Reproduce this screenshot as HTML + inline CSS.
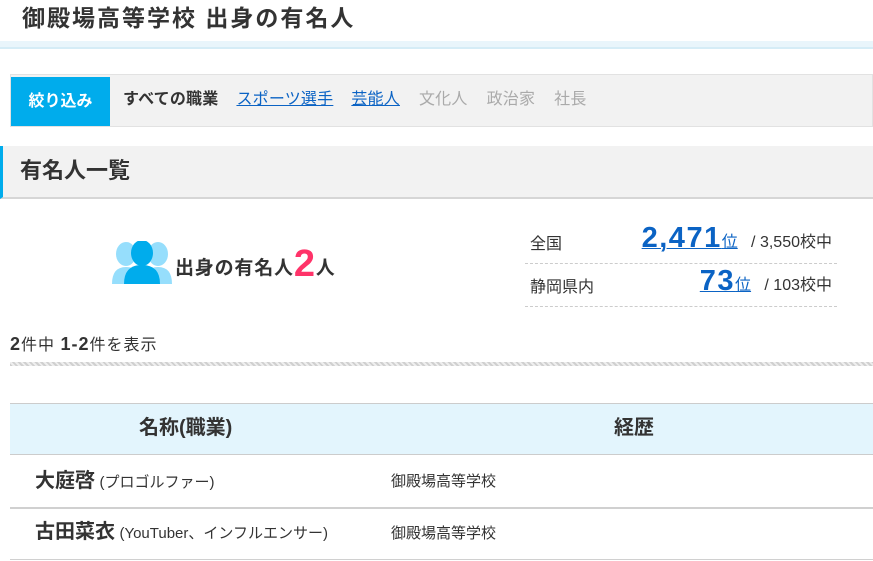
<!DOCTYPE html>
<html><head><meta charset="utf-8"><style>
*{margin:0;padding:0;box-sizing:border-box}
body{width:873px;height:561px;overflow:hidden;background:#fff;font-family:"Liberation Sans","Noto Sans CJK JP",sans-serif;color:#333;position:relative}
.a{position:absolute;white-space:nowrap}
</style></head><body>
<div class="a" style="left:22px;top:3px;font-size:23px;font-weight:bold;line-height:30px;letter-spacing:2px">御殿場高等学校 出身の有名人</div>
<div class="a" style="left:0;top:41px;width:873px;height:8px;background:#e9f5fb;border-bottom:2px solid #d5ecf6"></div>

<div class="a" style="left:10px;top:74px;width:863px;height:53px;background:#f2f2f2;border:1px solid #e2e2e2"></div>
<div class="a" style="left:11px;top:77px;width:99px;height:49px;background:#00acec;color:#fff;font-size:16px;font-weight:bold;text-align:center;line-height:49px">絞り込み</div>
<div class="a" style="left:123px;top:89px;font-size:16px;line-height:22px;letter-spacing:0.2px"><b>すべての職業</b><span style="margin-left:18px;color:#0b63c4;text-decoration:underline">スポーツ選手</span><span style="margin-left:18px;color:#0b63c4;text-decoration:underline">芸能人</span><span style="margin-left:19px;color:#aaa">文化人</span><span style="margin-left:19px;color:#aaa">政治家</span><span style="margin-left:19px;color:#aaa">社長</span></div>

<div class="a" style="left:0;top:146px;width:873px;height:53px;background:#f2f2f2;border-left:3px solid #00acec;border-bottom:2px solid #d6d6d6"></div>
<div class="a" style="left:20px;top:156px;font-size:22px;font-weight:bold;line-height:30px">有名人一覧</div>

<svg class="a" style="left:112px;top:241px" width="60" height="44" viewBox="0 0 60 44">
<g fill="#96defc"><ellipse cx="14" cy="13" rx="10" ry="12"/><path d="M0 43 Q0 26 14 26 Q28 26 28 43Z"/><ellipse cx="46" cy="13" rx="10" ry="12"/><path d="M32 43 Q32 26 46 26 Q60 26 60 43Z"/></g>
<g fill="#00acec"><ellipse cx="30" cy="12" rx="11" ry="13"/><path d="M12 43 Q12 24 30 24 Q48 24 48 43Z"/></g>
</svg>
<div class="a" style="left:175px;top:244px;font-size:19px;font-weight:bold;line-height:40px;letter-spacing:0.8px">出身の有名人<span style="color:#ff3369;font-size:38px;vertical-align:-2px">2</span>人</div>

<div class="a" style="left:525px;top:263px;width:312px;border-top:1px dashed #ccc"></div>
<div class="a" style="left:525px;top:306px;width:312px;border-top:1px dashed #ccc"></div>
<div class="a" style="left:530px;top:230px;font-size:16px">全国</div>
<div class="a" style="right:41px;top:222px;font-size:16px"><span style="color:#0b63c4;text-decoration:underline"><b style="font-size:29px;letter-spacing:1.5px">2,471</b>位</span>&nbsp;&nbsp;&nbsp;/ 3,550校中</div>
<div class="a" style="left:530px;top:273px;font-size:16px">静岡県内</div>
<div class="a" style="right:41px;top:265px;font-size:16px"><span style="color:#0b63c4;text-decoration:underline"><b style="font-size:29px;letter-spacing:1.5px">73</b>位</span>&nbsp;&nbsp;&nbsp;/ 103校中</div>

<div class="a" style="left:10px;top:333px;font-size:16px;line-height:22px;letter-spacing:1px"><b style="font-size:18px">2</b>件中 <b style="font-size:18px">1-2</b>件を表示</div>
<div class="a" style="left:10px;top:362px;width:863px;height:4px;background:repeating-linear-gradient(45deg,#d0d0d0 0 2px,#eee 2px 4px)"></div>

<div class="a" style="left:10px;top:403px;width:863px;height:52px;background:#e3f5fd;border-top:1px solid #ccc;border-bottom:1px solid #ccc"></div>
<div class="a" style="left:139px;top:415px;font-size:20px;font-weight:bold;line-height:26px">名称(職業)</div>
<div class="a" style="left:614px;top:415px;font-size:20px;font-weight:bold;line-height:26px">経歴</div>
<div class="a" style="left:10px;top:507px;width:863px;border-top:2px solid #d0d0d0"></div>
<div class="a" style="left:10px;top:559px;width:863px;border-top:1px solid #d0d0d0"></div>
<div class="a" style="left:35px;top:468px;line-height:26px"><b style="font-size:20px">大庭啓</b> <span style="font-size:15px">(プロゴルファー)</span></div>
<div class="a" style="left:391px;top:470px;font-size:15px">御殿場高等学校</div>
<div class="a" style="left:35px;top:519px;line-height:26px"><b style="font-size:20px">古田菜衣</b> <span style="font-size:15px">(YouTuber、インフルエンサー)</span></div>
<div class="a" style="left:391px;top:522px;font-size:15px">御殿場高等学校</div>
</body></html>
